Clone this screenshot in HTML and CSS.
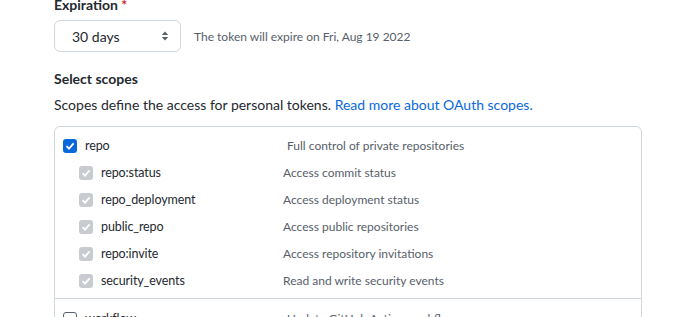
FILE: index.html
```html
<!DOCTYPE html>
<html lang="en">
<head>
    <meta charset="UTF-8">
    <title>New personal access token</title>
    <link rel="stylesheet" href="styles.css">
</head>
<body>
    <div class="page">
        <div class="field">
            <h3 class="field-label">Expiration <span class="required">*</span></h3>
            <div class="expiration-row">
                <div class="select">
                    <span>30 days</span>
                    <svg class="select-caret" width="8" height="12" viewBox="0 0 8 12">
                        <path d="M4 1.5 L7.2 5 H0.8 Z" fill="#57606a"/>
                        <path d="M4 10.5 L7.2 7 H0.8 Z" fill="#57606a"/>
                    </svg>
                </div>
                <span class="note">The token will expire on Fri, Aug 19 2022</span>
            </div>
        </div>

        <h3 class="section-title">Select scopes</h3>
        <p class="section-desc">Scopes define the access for personal tokens. <a href="#">Read more about OAuth scopes.</a></p>

        <div class="scopes">
            <div class="scope-group">
                <div class="scope-row scope-parent">
                    <span class="check check-on">
                        <svg width="10" height="10" viewBox="0 0 10 10"><path d="M1.5 5.2 L4 7.6 L8.6 2.4" fill="none" stroke="#fff" stroke-width="1.8"/></svg>
                    </span>
                    <span class="scope-name">repo</span>
                    <span class="scope-desc">Full control of private repositories</span>
                </div>
                <div class="scope-row scope-child">
                    <span class="check check-off"><svg width="10" height="10" viewBox="0 0 10 10"><path d="M1.5 5.2 L4 7.6 L8.6 2.4" fill="none" stroke="#fff" stroke-width="1.8"/></svg></span>
                    <span class="scope-name">repo:status</span>
                    <span class="scope-desc">Access commit status</span>
                </div>
                <div class="scope-row scope-child">
                    <span class="check check-off"><svg width="10" height="10" viewBox="0 0 10 10"><path d="M1.5 5.2 L4 7.6 L8.6 2.4" fill="none" stroke="#fff" stroke-width="1.8"/></svg></span>
                    <span class="scope-name">repo_deployment</span>
                    <span class="scope-desc">Access deployment status</span>
                </div>
                <div class="scope-row scope-child">
                    <span class="check check-off"><svg width="10" height="10" viewBox="0 0 10 10"><path d="M1.5 5.2 L4 7.6 L8.6 2.4" fill="none" stroke="#fff" stroke-width="1.8"/></svg></span>
                    <span class="scope-name">public_repo</span>
                    <span class="scope-desc">Access public repositories</span>
                </div>
                <div class="scope-row scope-child">
                    <span class="check check-off"><svg width="10" height="10" viewBox="0 0 10 10"><path d="M1.5 5.2 L4 7.6 L8.6 2.4" fill="none" stroke="#fff" stroke-width="1.8"/></svg></span>
                    <span class="scope-name">repo:invite</span>
                    <span class="scope-desc">Access repository invitations</span>
                </div>
                <div class="scope-row scope-child">
                    <span class="check check-off"><svg width="10" height="10" viewBox="0 0 10 10"><path d="M1.5 5.2 L4 7.6 L8.6 2.4" fill="none" stroke="#fff" stroke-width="1.8"/></svg></span>
                    <span class="scope-name">security_events</span>
                    <span class="scope-desc">Read and write security events</span>
                </div>
            </div>
            <div class="scope-group">
                <div class="scope-row scope-parent">
                    <span class="check check-empty"></span>
                    <span class="scope-name">workflow</span>
                    <span class="scope-desc">Update GitHub Action workflows</span>
                </div>
            </div>
        </div>
    </div>
</body>
</html>
```

FILE: styles.css
```css
body {
    margin: 0;
    background: #fff;
    color: #24292f;
    font: normal 14px "Lato", "Noto Sans", sans-serif;
    overflow: hidden;
}

.page {
    margin-top: -6px;
    padding-left: 54px;
    width: 588px;
}

.field-label,
.section-title {
    margin: 0;
    font-size: 14px;
    font-weight: 700;
    line-height: 21px;
}

.required {
    color: #cf222e;
}

.expiration-row {
    display: flex;
    align-items: center;
    margin-top: 5px;
}

.select {
    box-sizing: border-box;
    width: 127px;
    height: 32px;
    display: flex;
    align-items: center;
    justify-content: space-between;
    padding: 0 11px 0 17px;
    border: 1px solid #d0d7de;
    border-radius: 6px;
    font-size: 14px;
}

.note {
    margin-left: 13px;
    font-size: 12px;
    color: #57606a;
}

.section-title {
    margin-top: 16px;
}

.section-desc {
    margin: 5px 0 0;
    line-height: 21px;
}

.section-desc a {
    color: #0969da;
    text-decoration: none;
}

.scopes {
    margin-top: 11px;
    border: 1px solid #d0d7de;
    border-radius: 6px;
}

.scope-group {
    padding: 5px 0 4px;
}

.scope-group + .scope-group {
    border-top: 1px solid #d0d7de;
    padding-top: 6px;
}

.scope-row {
    display: flex;
    align-items: center;
    height: 27px;
    font-size: 12.5px;
    letter-spacing: -0.1px;
}

.scope-parent {
    padding-left: 8px;
}

.scope-child {
    padding-left: 24px;
}

.check {
    box-sizing: border-box;
    width: 14px;
    height: 14px;
    border-radius: 3px;
    display: flex;
    align-items: center;
    justify-content: center;
    flex: none;
}

.check-on {
    background: #0969da;
}

.check-off {
    background: #c8ccd0;
}

.check-empty {
    border: 1px solid #57606a;
}

.scope-name {
    margin-left: 8px;
}

.scope-parent .scope-name {
    width: 202px;
}

.scope-child .scope-name {
    width: 182px;
}

.scope-desc {
    font-size: 12px;
    letter-spacing: 0;
    color: #57606a;
}
```
